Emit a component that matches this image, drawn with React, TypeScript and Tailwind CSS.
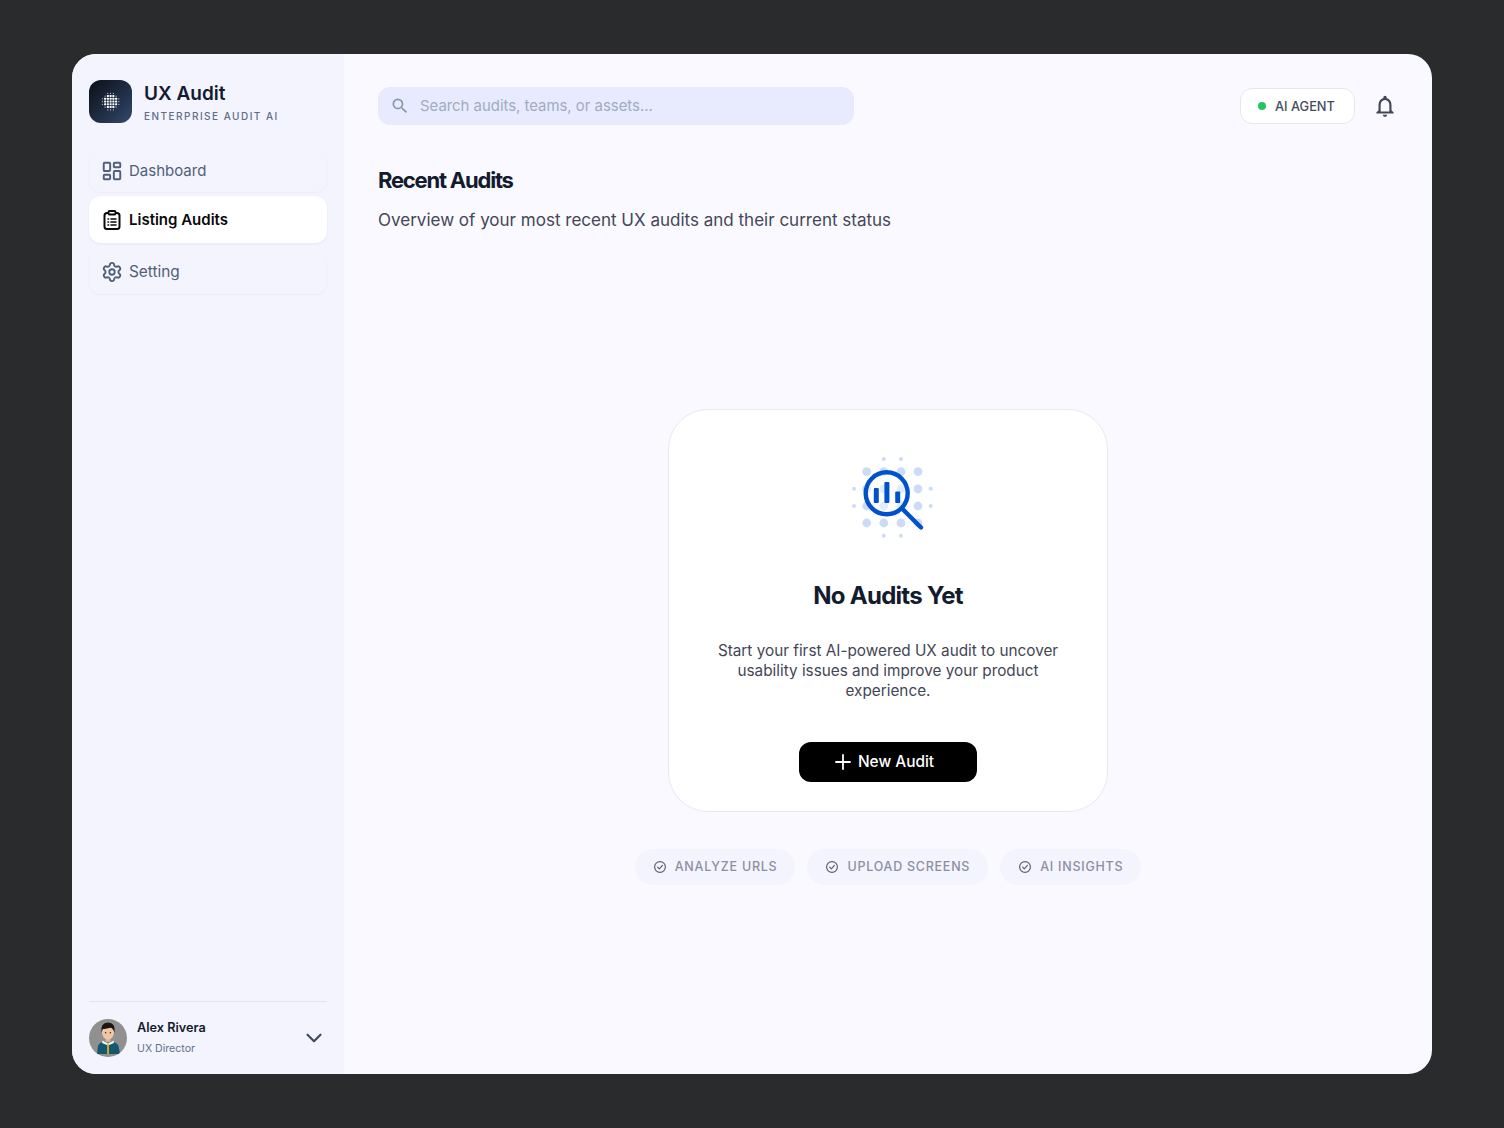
import React from "react";
import { LayoutDashboard, Settings, ChevronDown, Plus } from "lucide-react";
import { MdNotificationsNone, MdSearch } from "react-icons/md";

const gridPos = [16.7, 33.8, 51, 68];

const EmptyIcon = () => (
  <svg width="92" height="84" viewBox="-8 0 92 84" fill="none">
    <g fill="#cddcf6">
      {gridPos.map((x) =>
        gridPos.map((y) => <circle key={`${x}-${y}`} cx={x} cy={y} r="4.4" />)
      )}
      {[33.8, 51].map((p) => (
        <React.Fragment key={p}>
          <circle cx={p} cy="4" r="2" />
          <circle cx={p} cy="80.7" r="2" />
          <circle cx="4" cy={p} r="2" />
          <circle cx="80.7" cy={p} r="2" />
        </React.Fragment>
      ))}
    </g>
    <circle cx="36.7" cy="38.3" r="21" fill="#fff" fillOpacity="0.45" stroke="#0052cc" strokeWidth="4.4" />
    <path d="M53 54.5 L71 72.5" stroke="#0052cc" strokeWidth="4.4" strokeLinecap="round" />
    <rect x="23.8" y="33" width="5" height="15" rx="1" fill="#0052cc" />
    <rect x="34.4" y="27" width="5" height="21" rx="1" fill="#0052cc" />
    <rect x="45.2" y="36.6" width="5" height="11.4" rx="1" fill="#0052cc" />
  </svg>
);

const LogoMark = () => {
  const cells = [-3, -2, -1, 0, 1, 2, 3];
  return (
    <div className="flex h-[43px] w-[43px] items-center justify-center rounded-xl bg-gradient-to-br from-[#0b1019] to-[#33496d]">
      <svg width="20" height="20" viewBox="0 0 20 20">
        {cells.map((a) =>
          cells.map((b) => {
            const d = Math.hypot(a, b);
            if (d > 3.4) return null;
            return <rect key={`${a}${b}`} x={9.6 + a * 2.75 - (d < 2.3 ? 1 : 0.55)} y={9.6 + b * 2.75 - (d < 2.3 ? 1 : 0.55)} width={d < 2.3 ? 2 : 1.1} height={d < 2.3 ? 2 : 1.1} rx="0.5" fill="#fff" opacity={d < 2.3 ? 1 : 0.75} />;
          })
        )}
      </svg>
    </div>
  );
};

const Avatar = () => (
  <svg width="38" height="38" viewBox="0 0 38 38" className="shrink-0">
    <clipPath id="av"><circle cx="19" cy="19" r="19" /></clipPath>
    <g clipPath="url(#av)">
      <rect width="38" height="38" fill="#909090" />
      <path d="M8 35 L9 27 Q10 23.5 15 22.5 L23 22.5 Q28 23.5 29.5 27 L31 35 Z" fill="#12596f" />
      <path d="M13.5 21.5 L19 24.5 L24.5 21.5 L25 24 L19 26.5 L13 24 Z" fill="#f3f3f3" />
      <rect x="18.2" y="25" width="1.7" height="10" fill="#eeb02c" />
      <rect x="16.5" y="18" width="5" height="5.5" fill="#e2b08f" />
      <ellipse cx="19" cy="13.5" rx="6" ry="7" fill="#f1c6a5" />
      <path d="M12.5 14 Q11 3.4 19 3.4 Q27 3.4 25.5 14 Q24.5 9.5 21.5 8.8 Q16 10 14 10 Q13 11 12.5 14 Z" fill="#1b1613" />
      <circle cx="16.6" cy="13.8" r="0.7" fill="#222" />
      <circle cx="21.4" cy="13.8" r="0.7" fill="#222" />
    </g>
  </svg>
);

const ClipboardIcon = () => (
  <svg width="18" height="20" viewBox="0 0 18 20" fill="none" stroke="#0a0a0a" strokeWidth="2" strokeLinecap="round" strokeLinejoin="round">
    <rect x="1.5" y="3" width="15" height="16" rx="2.5" />
    <rect x="5.5" y="1" width="7" height="3.6" rx="1" fill="#fff" />
    <path d="M5 9h.6M8 9h5M5 12h.6M8 12h5M5 15h.6M8 15h5" strokeWidth="1.6" />
  </svg>
);

const CheckBadge = () => (
  <svg width="14" height="14" viewBox="0 0 14 14" fill="none" stroke="#5d6170" strokeWidth="1.2" strokeLinecap="round" strokeLinejoin="round" className="shrink-0">
    <circle cx="7" cy="7" r="5.4" />
    <path d="M4.6 7.1 L6.3 8.8 L9.4 5.4" />
  </svg>
);

const chips = ["ANALYZE URLS", "UPLOAD SCREENS", "AI INSIGHTS"];

export default function App() {
  return (
    <div className="flex min-h-screen items-center justify-center bg-[#2a2b2d] font-['Inter',sans-serif]">
      <div className="flex h-[1020px] w-[1360px] overflow-hidden rounded-[24px] bg-[#f9f9ff]">
        {/* Sidebar */}
        <aside className="flex w-[272px] shrink-0 flex-col bg-[#f3f4fe] px-[17px]">
          <div className="mt-[26px] flex items-center gap-3">
            <LogoMark />
            <div>
              <div className="mt-[1px] text-[19px] font-semibold leading-[26px] text-[#131b2e]">UX Audit</div>
              <div className="mt-[2px] text-[10px] font-medium leading-[14px] tracking-[0.148em] text-[#5f6d85]">ENTERPRISE AUDIT AI</div>
            </div>
          </div>

          <nav className="mt-[27px] flex flex-col">
            <a className="flex h-[42px] items-center gap-[6px] rounded-xl pl-[12px] text-[15px] text-[#515f78] shadow-[0_1px_2px_rgba(90,100,160,0.06)]">
              <LayoutDashboard size={22} strokeWidth={2.1} />
              Dashboard
            </a>
            <a className="mt-[4px] flex h-[47px] items-center gap-[8px] rounded-xl bg-white pl-[14px] pt-[1px] text-[15px] font-semibold text-[#0a0a0a] shadow-[0_1px_3px_rgba(90,100,160,0.08)]">
              <ClipboardIcon />
              Listing Audits
            </a>
            <a className="mt-[7px] flex h-[44px] items-center gap-[6px] rounded-xl pl-[12px] pb-[1px] text-[15.4px] text-[#515f78] shadow-[0_1px_2px_rgba(90,100,160,0.06)]">
              <Settings size={22} strokeWidth={2} />
              Setting
            </a>
          </nav>

          <div className="mt-auto mb-[17px] border-t-[1.5px] border-[#e1e3ee] pt-[17px]">
            <div className="flex items-center">
              <Avatar />
              <div className="ml-[10px]">
                <div className="-mt-[2px] text-[12.7px] font-semibold leading-[18px] text-[#131b2e]">Alex Rivera</div>
                <div className="mt-[5px] text-[10.6px] leading-[14px] text-[#64718a]">UX Director</div>
              </div>
              <ChevronDown size={26} strokeWidth={2} className="ml-auto text-[#3d4a5f]" />
            </div>
          </div>
        </aside>

        {/* Main */}
        <main className="flex min-w-0 flex-1 flex-col px-[34px]">
          <header className="mt-[33px] flex items-center justify-between">
            <div className="flex h-[38px] w-[476px] items-center gap-[10px] rounded-xl border border-[#e6e9fa] bg-[#e8ebfd] pl-[11px]">
              <MdSearch size={20} className="text-[#8b97ad]" />
              <span className="text-[14.9px] text-[#a0abc0]">Search audits, teams, or assets...</span>
            </div>
            <div className="flex items-center gap-[17px]">
              <div className="flex h-[36px] w-[115px] items-center gap-[9px] rounded-xl border border-[#e5e6ec] bg-white pl-[17px]">
                <span className="h-2 w-2 rounded-full bg-[#22c55e]" />
                <span className="pt-[1px] text-[12.8px] font-medium text-[#434c5e]">AI AGENT</span>
              </div>
              <MdNotificationsNone size={26} className="text-[#434655]" />
            </div>
          </header>

          <h1 className="mt-[41px] text-[22px] font-bold leading-[28px] tracking-[-0.055em] text-[#131b2e]">Recent Audits</h1>
          <p className="mt-[14px] text-[17.03px] leading-[24px] text-[#434655]">Overview of your most recent UX audits and their current status</p>

          <section className="mt-[177px] flex flex-col items-center">
            <div className="flex h-[403px] w-[440px] flex-col items-center rounded-[40px] border border-[#e9e9f0] bg-white">
              <div className="mt-[45px]"><EmptyIcon /></div>
              <h2 className="mt-[41px] text-[24px] font-bold leading-[32px] tracking-[-0.03em] text-[#131b2e]">No Audits Yet</h2>
              <p className="mt-[29px] w-[360px] text-center text-[15.3px] leading-[20px] text-[#434655]">
                Start your first AI-powered UX audit to uncover usability issues and improve your product experience.
              </p>
              <button className="mt-[41px] flex h-[40px] w-[178px] items-center justify-center gap-[3px] rounded-xl bg-black pr-[11px] text-[15.4px] font-medium text-white">
                <Plus size={24} strokeWidth={1.8} />
                New Audit
              </button>
            </div>

            <div className="mt-[37px] flex gap-[12px]">
              {chips.map((c) => (
                <div key={c} className="flex h-[36px] items-center gap-[8px] rounded-full bg-[#f3f4fe] pl-[18px] pr-[18px]">
                  <CheckBadge />
                  <span className="text-[12.5px] font-medium tracking-[0.06em] text-[#8c8fa0]">{c}</span>
                </div>
              ))}
            </div>
          </section>
        </main>
      </div>
    </div>
  );
}
